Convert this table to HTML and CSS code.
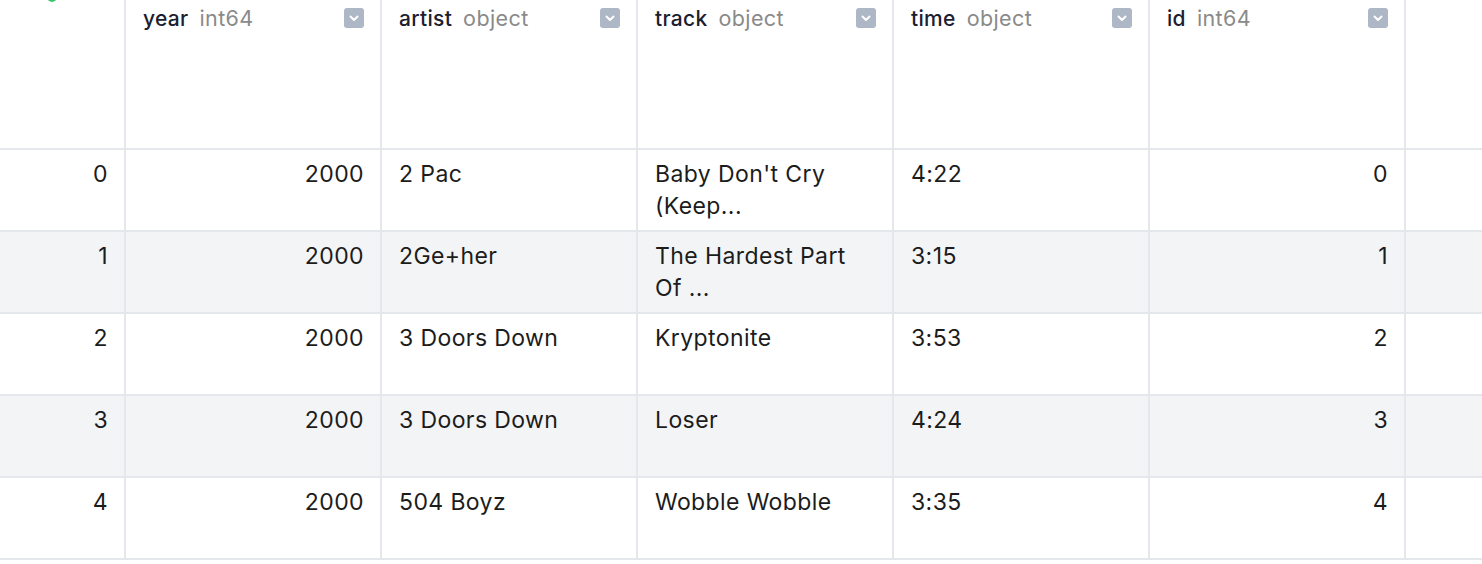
FILE: index.html
```html
<!DOCTYPE html>
<html>
<head>
<meta charset="utf-8">
<link rel="stylesheet" href="styles.css">
</head>
<body>
<div class="grid">
  <div class="row head">
    <div class="cell idx"><span class="status"></span></div>
    <div class="cell col"><div class="hd"><span class="name">year</span><span class="type">int64</span></div><span class="dd"><svg viewBox="0 0 20 20" width="20" height="20"><path d="M6.5 8.5 L10 12 L13.5 8.5" fill="none" stroke="#fff" stroke-width="2" stroke-linecap="round" stroke-linejoin="round"/></svg></span></div>
    <div class="cell col"><div class="hd"><span class="name">artist</span><span class="type">object</span></div><span class="dd"><svg viewBox="0 0 20 20" width="20" height="20"><path d="M6.5 8.5 L10 12 L13.5 8.5" fill="none" stroke="#fff" stroke-width="2" stroke-linecap="round" stroke-linejoin="round"/></svg></span></div>
    <div class="cell col"><div class="hd"><span class="name">track</span><span class="type">object</span></div><span class="dd"><svg viewBox="0 0 20 20" width="20" height="20"><path d="M6.5 8.5 L10 12 L13.5 8.5" fill="none" stroke="#fff" stroke-width="2" stroke-linecap="round" stroke-linejoin="round"/></svg></span></div>
    <div class="cell col"><div class="hd"><span class="name">time</span><span class="type">object</span></div><span class="dd"><svg viewBox="0 0 20 20" width="20" height="20"><path d="M6.5 8.5 L10 12 L13.5 8.5" fill="none" stroke="#fff" stroke-width="2" stroke-linecap="round" stroke-linejoin="round"/></svg></span></div>
    <div class="cell col"><div class="hd"><span class="name">id</span><span class="type">int64</span></div><span class="dd"><svg viewBox="0 0 20 20" width="20" height="20"><path d="M6.5 8.5 L10 12 L13.5 8.5" fill="none" stroke="#fff" stroke-width="2" stroke-linecap="round" stroke-linejoin="round"/></svg></span></div>
    <div class="cell fill"></div>
  </div>
  <div class="row">
    <div class="cell idx num">0</div>
    <div class="cell col num">2000</div>
    <div class="cell col">2 Pac</div>
    <div class="cell col">Baby Don't Cry<br>(Keep...</div>
    <div class="cell col">4:22</div>
    <div class="cell col num">0</div>
    <div class="cell fill"></div>
  </div>
  <div class="row alt">
    <div class="cell idx num">1</div>
    <div class="cell col num">2000</div>
    <div class="cell col">2Ge+her</div>
    <div class="cell col">The Hardest Part<br>Of ...</div>
    <div class="cell col">3:15</div>
    <div class="cell col num">1</div>
    <div class="cell fill"></div>
  </div>
  <div class="row">
    <div class="cell idx num">2</div>
    <div class="cell col num">2000</div>
    <div class="cell col">3 Doors Down</div>
    <div class="cell col">Kryptonite</div>
    <div class="cell col">3:53</div>
    <div class="cell col num">2</div>
    <div class="cell fill"></div>
  </div>
  <div class="row alt">
    <div class="cell idx num">3</div>
    <div class="cell col num">2000</div>
    <div class="cell col">3 Doors Down</div>
    <div class="cell col">Loser</div>
    <div class="cell col">4:24</div>
    <div class="cell col num">3</div>
    <div class="cell fill"></div>
  </div>
  <div class="row">
    <div class="cell idx num">4</div>
    <div class="cell col num">2000</div>
    <div class="cell col">504 Boyz</div>
    <div class="cell col">Wobble Wobble</div>
    <div class="cell col">3:35</div>
    <div class="cell col num">4</div>
    <div class="cell fill"></div>
  </div>
</div>
</body>
</html>
```

FILE: styles.css
```css
html, body {
  margin: 0;
  padding: 0;
  background: #fff;
}
body {
  font-family: Inter, "Noto Sans", sans-serif;
  color: #1c1c1c;
  overflow: hidden;
}
.grid {
  width: 1482px;
}
.row {
  display: flex;
  height: 80px;
  border-bottom: 2px solid #e4e7eb;
  background: #fff;
}
.row.head {
  height: 148px;
}
.row.alt {
  background: #f3f4f6;
}
.cell {
  box-sizing: border-box;
  flex: none;
  border-right: 2px solid #e4e7eb;
  padding: 8px 17px 0 17px;
  font-size: 23px;
  line-height: 32px;
  letter-spacing: 0.4px;
}
.cell.num {
  padding-right: 16px;
}
.cell.idx {
  width: 126px;
  position: relative;
}
.cell.col {
  width: 256px;
}
.head .cell.col {
  display: flex;
  justify-content: space-between;
  align-items: flex-start;
  padding: 2px 16px 0 17px;
}
.cell.fill {
  flex: 1;
  border-right: none;
}
.num {
  text-align: right;
}
.hd {
  display: flex;
  align-items: baseline;
  gap: 11px;
  line-height: 32px;
}
.name {
  font-size: 21px;
  font-weight: 500;
  color: #1b2030;
  letter-spacing: 0.3px;
}
.type {
  font-size: 21.5px;
  color: #8a8a8a;
  letter-spacing: 0.4px;
}
.dd {
  margin-top: 6px;
  width: 20px;
  height: 20px;
  border-radius: 3px;
  background: #adb7c6;
  display: flex;
}
.status {
  position: absolute;
  left: 47px;
  top: -8px;
  width: 10px;
  height: 10px;
  border-radius: 50%;
  border: 2px solid #3cc46a;
  box-sizing: border-box;
}
```
